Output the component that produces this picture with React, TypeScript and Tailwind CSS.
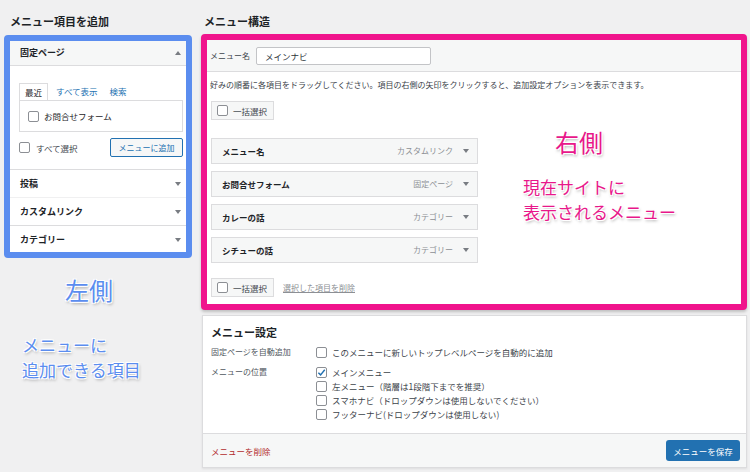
import React from "react";

function Box({ checked = false }: { checked?: boolean }) {
  return (
    <span className="inline-flex h-[11px] w-[11px] shrink-0 items-center justify-center rounded-[2px] border border-[#8c8f94] bg-white">
      {checked && (
        <svg viewBox="0 0 10 10" className="h-[9px] w-[9px]">
          <path d="M1.5 5.2 L4 7.6 L8.6 2" fill="none" stroke="#2271b1" strokeWidth="1.6" />
        </svg>
      )}
    </span>
  );
}

function Tri({ up = false }: { up?: boolean }) {
  return (
    <svg viewBox="0 0 6 4" className="h-[4px] w-[6px]">
      <path d={up ? "M0 4 L3 0 L6 4 Z" : "M0 0 L6 0 L3 4 Z"} fill="#787c82" />
    </svg>
  );
}

const menuItems = [
  { name: "メニュー名", type: "カスタムリンク" },
  { name: "お問合せフォーム", type: "固定ページ" },
  { name: "カレーの話", type: "カテゴリー" },
  { name: "シチューの話", type: "カテゴリー" },
];

const locations = [
  { label: "メインメニュー", checked: true },
  { label: "左メニュー（階層は1段階下までを推奨）", checked: false },
  { label: "スマホナビ（ドロップダウンは使用しないでください）", checked: false },
  { label: "フッターナビ(ドロップダウンは使用しない)", checked: false },
];

const shadow =
  "[text-shadow:1px_1px_0_#fff,-1px_-1px_0_#fff,1px_-1px_0_#fff,-1px_1px_0_#fff,1px_2px_3px_rgba(0,0,0,0.35)]";

function BulkButton() {
  return (
    <div className="flex h-[19px] w-[63px] items-center gap-[5px] whitespace-nowrap border border-[#dcdcde] bg-[#f6f7f7] px-[5px] text-[#3c434a]">
      <Box />
      <span>一括選択</span>
    </div>
  );
}

export default function App() {
  return (
    <div className="flex h-[472px] w-[750px] overflow-hidden bg-[#f0f0f1] font-['Noto_Sans_CJK_JP',sans-serif] text-[8.5px] leading-[12px] text-[#1d2327]">
      {/* left column */}
      <div className="ml-[4px] flex w-[188px] flex-col">
        <h2 className="h-[35px] pl-[6px] pt-[13px] text-[11px] font-bold leading-[16px]">メニュー項目を追加</h2>
        <div className="flex h-[223px] flex-col rounded-[4px] border-[6px] border-[#5b8def] bg-white">
          <div className="flex h-[25px] shrink-0 items-center justify-between border-b border-[#dcdcde] bg-[#f6f7f7] pl-[10px] pr-[5px]">
            <span className="text-[9px] font-bold">固定ページ</span>
            <Tri up />
          </div>
          <div className="flex h-[103px] shrink-0 flex-col pl-[9px] pr-[3px] pt-[17px]">
            <div className="flex h-[17px] items-end gap-[8px]">
              <span className="flex h-[17px] items-center border border-b-0 border-[#dcdcde] bg-white px-[5px]">最近</span>
              <span className="pb-[3px] text-[#2271b1]">すべて表示</span>
              <span className="pb-[3px] pl-[4px] text-[#2271b1]">検索</span>
            </div>
            <div className="flex h-[32px] items-center gap-[5px] border border-[#dcdcde] px-[8px]">
              <Box />
              <span>お問合せフォーム</span>
            </div>
            <div className="mt-[6px] flex h-[19px] items-center justify-between">
              <div className="flex items-center gap-[6px]">
                <Box />
                <span className="text-[#3c434a]">すべて選択</span>
              </div>
              <span className="flex h-[19px] w-[73px] items-center justify-center whitespace-nowrap rounded-[2px] border border-[#2271b1] bg-[#f6f7f7] text-[8px] text-[#2271b1]">
                メニューに追加
              </span>
            </div>
          </div>
          {["投稿", "カスタムリンク", "カテゴリー"].map((s, i) => (
            <div
              key={s}
              className={`flex h-[28px] shrink-0 items-center justify-between border-t pl-[10px] pr-[5px] ${
                i === 1 ? "border-[#f0f0f1]" : "border-[#dcdcde]"
              }`}
            >
              <span className="text-[9px] font-bold">{s}</span>
              <Tri />
            </div>
          ))}
        </div>
        <div className={`mt-[18px] pl-[61px] text-[24px] leading-[28px] text-[#5b8def] ${shadow}`}>左側</div>
        <div className={`mt-[28px] pl-[18px] text-[17px] leading-[25px] text-[#5b8def] ${shadow}`}>
          <div>メニューに</div>
          <div>追加できる項目</div>
        </div>
      </div>

      {/* right column */}
      <div className="ml-[9px] flex w-[546px] flex-col">
        <h2 className="h-[34px] pl-[3px] pt-[13px] text-[11px] font-bold leading-[16px]">メニュー構造</h2>
        <div className="relative flex h-[276px] flex-col rounded-[4px] border-[6px] border-[#f0148c] bg-white shadow-[0_2px_3px_rgba(0,0,0,0.2)]">
          <div className="flex h-[32px] shrink-0 items-center gap-[6px] border-b border-[#dcdcde] bg-[#f6f7f7] px-[3px]">
            <span className="text-[8px] text-[#3c434a]">メニュー名</span>
            <span className="flex h-[18px] w-[175px] items-center rounded-[2px] border border-[#c3c4c7] bg-white px-[8px] text-[#2c3338]">
              メインナビ
            </span>
          </div>
          <p className="px-[3px] pt-[7px] text-[8px] text-[#3c434a]">
            好みの順番に各項目をドラッグしてください。項目の右側の矢印をクリックすると、追加設定オプションを表示できます。
          </p>
          <div className="ml-[4px] mt-[10px]">
            <BulkButton />
          </div>
          <div className="ml-[4px] mt-[18px] flex w-[267px] flex-col gap-[7px]">
            {menuItems.map((m) => (
              <div
                key={m.name}
                className="flex h-[26px] items-center justify-between border border-[#dcdcde] bg-[#f6f7f7] pl-[10px] pr-[8px]"
              >
                <span className="font-bold">{m.name}</span>
                <span className="flex items-center gap-[10px] text-[8px] text-[#8c8f94]">
                  {m.type}
                  <Tri />
                </span>
              </div>
            ))}
          </div>
          <div className="ml-[4px] mt-[15px] flex items-center gap-[9px]">
            <BulkButton />
            <span className="text-[8px] text-[#8c8f94] underline">選択した項目を削除</span>
          </div>

          <div className={`absolute left-[348px] top-[89px] text-[24px] leading-[26px] text-[#e8178a] ${shadow}`}>右側</div>
          <div className={`absolute left-[316px] top-[134px] text-[17px] leading-[25px] text-[#e8178a] ${shadow}`}>
            <div>現在サイトに</div>
            <div>表示されるメニュー</div>
          </div>
        </div>

        {/* settings */}
        <div className="ml-[1px] mt-[5px] flex h-[153px] flex-col border border-[#dcdcde] bg-white shadow-[0_1px_2px_rgba(0,0,0,0.08)]">
          <h3 className="px-[8px] pt-[8px] text-[11px] font-bold leading-[16px]">メニュー設定</h3>
          <div className="mt-[5px] flex px-[8px] leading-[14px]">
            <span className="w-[105px] text-[8px] text-[#50575e]">固定ページを自動追加</span>
            <span className="flex items-center gap-[5px] text-[#3c434a]">
              <Box />
              このメニューに新しいトップレベルページを自動的に追加
            </span>
          </div>
          <div className="mt-[6px] flex px-[8px] leading-[14px]">
            <span className="w-[105px] text-[8px] text-[#50575e]">メニューの位置</span>
            <div className="flex flex-col">
              {locations.map((l) => (
                <span key={l.label} className="flex h-[14px] items-center gap-[5px] text-[#3c434a]">
                  <Box checked={l.checked} />
                  {l.label}
                </span>
              ))}
            </div>
          </div>
          <div className="mt-auto flex h-[34px] items-center justify-between border-t border-[#dcdcde] bg-[#f6f7f7] pl-[8px] pr-[6px]">
            <span className="text-[#b32d2e]">メニューを削除</span>
            <span className="flex h-[21px] w-[74px] items-center justify-center rounded-[3px] bg-[#2271b1] text-white">
              メニューを保存
            </span>
          </div>
        </div>
      </div>
    </div>
  );
}
